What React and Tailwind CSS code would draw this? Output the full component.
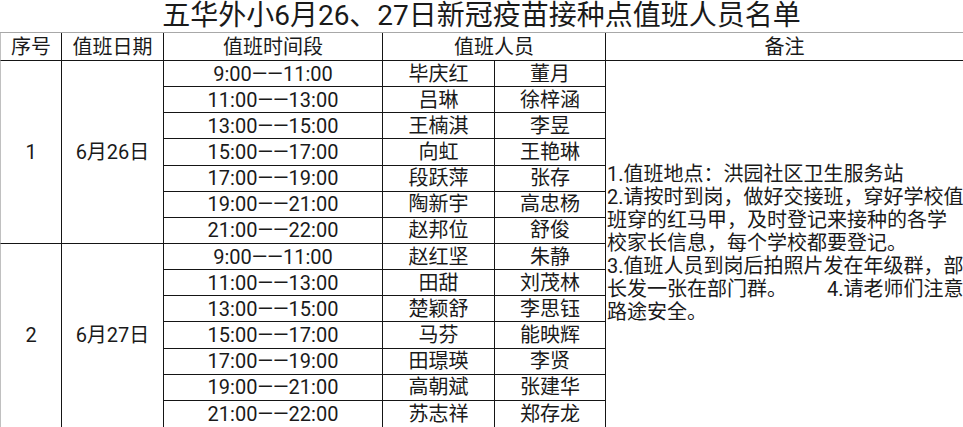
import React from "react";

const groups = [
  {
    no: "1",
    date: "6月26日",
    rows: [
      ["9:00——11:00", "毕庆红", "董月"],
      ["11:00——13:00", "吕琳", "徐梓涵"],
      ["13:00——15:00", "王楠淇", "李昱"],
      ["15:00——17:00", "向虹", "王艳琳"],
      ["17:00——19:00", "段跃萍", "张存"],
      ["19:00——21:00", "陶新宇", "高忠杨"],
      ["21:00——22:00", "赵邦位", "舒俊"],
    ],
  },
  {
    no: "2",
    date: "6月27日",
    rows: [
      ["9:00——11:00", "赵红坚", "朱静"],
      ["11:00——13:00", "田甜", "刘茂林"],
      ["13:00——15:00", "楚颖舒", "李思钰"],
      ["15:00——17:00", "马芬", "能映辉"],
      ["17:00——19:00", "田璟瑛", "李贤"],
      ["19:00——21:00", "高朝斌", "张建华"],
      ["21:00——22:00", "苏志祥", "郑存龙"],
    ],
  },
];

const cell = "flex items-center justify-center border-r border-[#151515] whitespace-nowrap overflow-hidden";

export default function App() {
  return (
    <div className="w-[963px] h-[427px] overflow-hidden bg-white text-[#1a1a1a] font-['Roboto','Noto_Sans_CJK_SC',sans-serif]">
      <div className="grid h-[427px] grid-cols-[62px_102px_219px_112px_111px_minmax(0,1fr)] grid-rows-[33px_28px_repeat(14,minmax(0,1fr))] text-[20px] leading-none">
        <div className="col-span-6 flex items-center justify-center border-b border-[#a8a8a8] text-[28px] whitespace-nowrap">
          五华外小6月26、27日新冠疫苗接种点值班人员名单
        </div>
        <div className={`${cell} border-b border-l border-l-[#c0c0c0]`}>序号</div>
        <div className={`${cell} border-b`}>值班日期</div>
        <div className={`${cell} border-b`}>值班时间段</div>
        <div className={`${cell} border-b col-span-2`}>值班人员</div>
        <div className="flex items-center justify-center border-b border-[#151515]">备注</div>
        {groups.map((g, gi) => {
          const last = gi === groups.length - 1;
          return (
            <React.Fragment key={g.no}>
              <div className={`${cell} row-span-7 border-l border-l-[#c0c0c0] ${last ? "" : "border-b"}`}>{g.no}</div>
              <div className={`${cell} row-span-7 ${last ? "" : "border-b"}`}>{g.date}</div>
              {g.rows.map((r, ri) => {
                const bb = last && ri === g.rows.length - 1 ? "" : "border-b";
                return (
                  <React.Fragment key={ri}>
                    <div className={`${cell} ${bb}`}>{r[0]}</div>
                    <div className={`${cell} ${bb}`}>{r[1]}</div>
                    <div className={`${cell} ${bb}`}>{r[2]}</div>
                    {gi === 0 && ri === 0 && (
                      <div className="row-span-14 flex flex-col justify-center pl-px text-[20px] leading-[23px] whitespace-nowrap overflow-hidden">
                        <div>1.值班地点：洪园社区卫生服务站</div>
                        <div>2.请按时到岗，做好交接班，穿好学校值</div>
                        <div>班穿的红马甲，及时登记来接种的各学</div>
                        <div>校家长信息，每个学校都要登记。</div>
                        <div>3.值班人员到岗后拍照片发在年级群，部</div>
                        <div>
                          长发一张在部门群。<span className="ml-[40px]">4.请老师们注意</span>
                        </div>
                        <div>路途安全。</div>
                      </div>
                    )}
                  </React.Fragment>
                );
              })}
            </React.Fragment>
          );
        })}
      </div>
    </div>
  );
}
